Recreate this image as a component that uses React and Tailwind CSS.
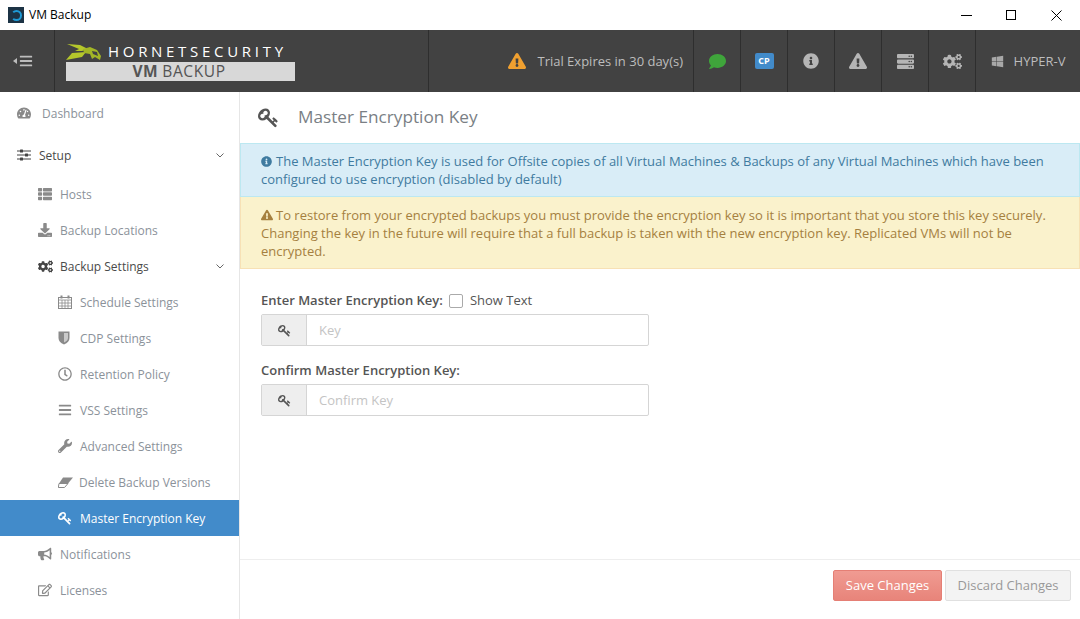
import {
  FaTachometerAlt, FaThList, FaDownload, FaCogs, FaRegClock, FaBars,
  FaWrench, FaBullhorn, FaRegEdit, FaInfoCircle, FaExclamationTriangle, FaComment, FaServer,
  FaWindows,
} from "react-icons/fa";

const font = { fontFamily: '"Open Sans", sans-serif' };

// old font awesome key, the newer one points the other way and has no hollow bow
function KeyIcon({ className }) {
  return (
    <svg viewBox="0 0 1792 1792" fill="currentColor" className={className} width="1em" height="1em">
      <path d="M832 512q0-80-56-136t-136-56-136 56-56 136q0 42 19 83-41-19-83-19-80 0-136 56t-56 136 56 136 136 56 136-56 56-136q0-42-19-83 41 19 83 19 80 0 136-56t56-136zm851 704q0 17-49 66t-66 49q-9 0-28.500-16t-36.500-33-38.500-40-24.500-26l-96 96 220 220q28 28 28 68 0 42-39 81t-81 39q-40 0-68-28l-671-671q-176 131-365 131-163 0-265.500-102.500t-102.500-265.500q0-160 95-313t248-248 313-95q163 0 265.500 102.500t102.500 265.500q0 189-131 365l355 355 96-96q-3-3-26-24.500t-40-38.500-33-36.500-16-28.500q0-17 49-66t66-49q13 0 23 10 6 6 46 44.500t82 79.500 86.500 86 73 78 28.500 41z" />
    </svg>
  );
}

function SlidersIcon({ className }) {
  return (
    <svg viewBox="0 0 14 12" width="14" height="12" className={className} fill="currentColor">
      <path d="M0 1.5h14v1H0zM0 5.500h14v1H0zM0 9.500h14v1H0z" />
      <rect x="3" y="0.5" width="3" height="3" rx="0.5" />
      <rect x="8" y="4.500" width="3" height="3" rx="0.5" />
      <rect x="3" y="8.500" width="3" height="3" rx="0.5" />
    </svg>
  );
}

function CalendarIcon({ className }) {
  return (
    <svg viewBox="0 0 14 14" width="14" height="14" className={className} fill="none" stroke="currentColor" strokeWidth="1">
      <rect x="0.5" y="2.500" width="13" height="11" />
      <path d="M0.500 5h13M0.500 8h13M0.500 11h13M4 5v8.500M7 5v8.500M10 5v8.500" strokeWidth="0.8" />
      <path d="M3.500 0.500v3M10.500 0.500v3" strokeWidth="2" />
    </svg>
  );
}

function ShieldIcon({ className }) {
  return (
    <svg viewBox="0 0 12 14" width="12" height="14" className={className}>
      <path d="M0.500 0.500h11v6.500q0 4-5.500 6.500-5.500-2.500-5.500-6.500z" fill="currentColor" />
      <path d="M6 2h4v5q0 2.500-4 4.500z" fill="#fff" opacity="0.55" />
    </svg>
  );
}

function EraserIcon({ className }) {
  return (
    <svg viewBox="0 0 15 11" width="15" height="11" className={className}>
      <path d="M5 0.500h10l-5 6H1z" fill="currentColor" />
      <path d="M1 6.500h9l-3.500 4H0.300z" fill="none" stroke="currentColor" strokeWidth="1" />
    </svg>
  );
}

function Chevron() {
  return (
    <svg width="8" height="5" viewBox="0 0 8 5" className="text-[#666]">
      <path d="M0.500 0.500 L4 4 L7.500 0.500" fill="none" stroke="currentColor" strokeWidth="1" />
    </svg>
  );
}

function NavItem({ icon: Icon, label, indent = 0, dark, arrow, active, iconClass = "text-[14px]", gap }) {
  const pad = indent === 0 ? "pl-[17px]" : indent === 1 ? "pl-[38px]" : "pl-[58px]";
  const labelGap = gap || (indent === 0 ? "w-[25px]" : "w-[22px]");
  const color = active ? "bg-[#428bca] text-white" : dark ? "text-[#4a4a4a]" : "text-[#8b929a]";
  const iconColor = active ? "text-white" : dark ? "text-[#444]" : "text-[#8a8a8a]";
  return (
    <div className={`flex items-center h-9 ${pad} pr-[15px] text-[12px] ${color}`}>
      <span className={`${labelGap} shrink-0 flex items-center ${iconColor}`}>
        <Icon className={iconClass} />
      </span>
      <span className="flex-1 pt-[1px]">{label}</span>
      {arrow && <Chevron />}
    </div>
  );
}

function Sidebar() {
  return (
    <aside className="w-[240px] shrink-0 border-r border-[#e6e6e6] pt-[3px] overflow-hidden">
      <NavItem icon={FaTachometerAlt} label="Dashboard" />
      <div className="h-[6px]" />
      <NavItem icon={SlidersIcon} label="Setup" dark arrow gap="w-[22px]" />
      <div className="h-[3px]" />
      <NavItem icon={FaThList} label="Hosts" indent={1} />
      <NavItem icon={FaDownload} label="Backup Locations" indent={1} />
      <NavItem icon={FaCogs} label="Backup Settings" indent={1} dark arrow iconClass="text-[15px]" />
      <NavItem icon={CalendarIcon} label="Schedule Settings" indent={2} />
      <NavItem icon={ShieldIcon} label="CDP Settings" indent={2} />
      <NavItem icon={FaRegClock} label="Retention Policy" indent={2} />
      <NavItem icon={FaBars} label="VSS Settings" indent={2} />
      <NavItem icon={FaWrench} label="Advanced Settings" indent={2} />
      <NavItem icon={EraserIcon} label="Delete Backup Versions" indent={2} gap="w-[21px]" />
      <NavItem icon={KeyIcon} label="Master Encryption Key" indent={2} active />
      <NavItem icon={FaBullhorn} label="Notifications" indent={1} />
      <NavItem icon={FaRegEdit} label="Licenses" indent={1} />
    </aside>
  );
}

function HeaderCell({ children, className = "w-[47px]" }) {
  return (
    <div className={`h-full border-l border-[#2e2e2e] flex items-center justify-center shrink-0 ${className}`}>
      {children}
    </div>
  );
}

function Hornet() {
  return (
    <svg width="36" height="17" viewBox="0 0 36 17" className="shrink-0">
      <path d="M1 0 L14 1 L22 5 L16 7 L9 7 L13 5 Z" fill="#b5c72b" />
      <path d="M0 16 L6 9 L20 8 L16 13 Z" fill="#b5c72b" />
      <path d="M17 5 L24 3 L31 6 L35 12 L34 16 L29 13 L26 15 L24 10 L18 9 Z" fill="#a3b626" />
      <path d="M26 7 L31 8 L32 12 L27 10 Z" fill="#424242" />
    </svg>
  );
}

function Header() {
  return (
    <header className="h-[62px] bg-[#424242] flex items-center shrink-0">
      <div className="w-[55px] h-full flex items-center pl-[13px] gap-[2px] shrink-0 border-r border-[#2e2e2e]">
        <svg width="4" height="6" viewBox="0 0 4 6"><path d="M4 0 V6 L0 3 Z" fill="#bdbdbd" /></svg>
        <FaBars className="text-[14px] text-[#bdbdbd]" />
      </div>
      <div className="w-[374px] h-full shrink-0 pl-[11px] pt-[13px] border-r border-[#2e2e2e]">
        <div className="w-[229px] h-[19px] flex items-center">
          <Hornet />
          <span className="ml-[6px] pb-[2px] text-[15px] leading-none tracking-[3.700px] text-white whitespace-nowrap">
            HORNETSECURITY
          </span>
        </div>
        <div className="w-[229px] h-[19px] bg-[#d8d8d8] flex items-center justify-center text-[15.500px] tracking-[0.600px] leading-none text-[#555] pr-[3px]">
          <b className="mr-[4px]">VM</b> BACKUP
        </div>
      </div>
      <div className="flex-1 h-full flex items-center justify-end pr-[10px] text-[13px] text-[#bdbdbd]">
        <FaExclamationTriangle className="text-[18px] text-[#f0a030] mr-[11px]" />
        <span className="pt-[1px]">Trial Expires in 30 day(s)</span>
      </div>
      <HeaderCell><FaComment className="text-[17px] text-[#3fa53b]" /></HeaderCell>
      <HeaderCell>
        <span className="w-[19px] h-[16px] rounded-[2px] bg-[#428bca] text-white text-[9px] font-bold flex items-center justify-center">CP</span>
      </HeaderCell>
      <HeaderCell><FaInfoCircle className="text-[16px] text-[#b5b5b5]" /></HeaderCell>
      <HeaderCell><FaExclamationTriangle className="text-[18px] text-[#b5b5b5]" /></HeaderCell>
      <HeaderCell><FaServer className="text-[17px] text-[#b5b5b5]" /></HeaderCell>
      <HeaderCell><FaCogs className="text-[19px] text-[#b5b5b5]" /></HeaderCell>
      <HeaderCell className="w-[105px] gap-[10px] text-[13px] text-[#bdbdbd]">
        <FaWindows className="text-[13px] text-[#a8a8a8]" />
        <span className="pt-[1px]">HYPER-V</span>
      </HeaderCell>
    </header>
  );
}

function KeyInput({ placeholder }) {
  return (
    <div className="w-[388px] h-[32px] flex border border-[#d5d5d5] rounded-[2px] bg-white">
      <div className="w-[45px] shrink-0 bg-[#eeeeee] border-r border-[#d5d5d5] flex items-center justify-center">
        <KeyIcon className="text-[13px] text-[#555]" />
      </div>
      <div className="flex-1 pl-[12px] pt-[1px] flex items-center text-[13px] text-[#c4c4c4]">{placeholder}</div>
    </div>
  );
}

export default function App() {
  return (
    <div style={font} className="w-[1080px] h-[619px] overflow-hidden bg-white flex flex-col">
      <div className="h-[30px] shrink-0 flex items-center text-[12px] text-black">
        <span className="ml-[8px] w-[16px] h-[16px] bg-[#1c3345] flex items-center justify-center">
          <span className="w-[11px] h-[11px] rounded-full border-2 border-[#1e9ad6] border-l-transparent" />
        </span>
        <span className="ml-[5px] flex-1">VM Backup</span>
        <span className="w-[11px] h-px bg-black mr-[34px]" />
        <span className="w-[10px] h-[10px] border border-black mr-[35px]" />
        <svg width="11" height="11" viewBox="0 0 11 11" className="mr-[18px]">
          <path d="M0.5 0.5 L10.5 10.5 M10.5 0.5 L0.5 10.5" stroke="#000" strokeWidth="1" />
        </svg>
      </div>
      <Header />
      <div className="flex flex-1 min-h-0">
        <Sidebar />
        <main className="flex-1 flex flex-col min-w-0">
          <div className="h-[51px] shrink-0 flex items-center pl-[18px]">
            <KeyIcon className="text-[21px] text-[#555]" />
            <h1 className="ml-[19px] pb-[2px] text-[17.200px] font-normal text-[#7a7f85]">Master Encryption Key</h1>
          </div>
          <div className="h-[54px] shrink-0 bg-[#d9edf7] border border-[#bce8f1] text-[#3f7ba0] text-[13px] leading-[18px] pl-[20px] pr-[20px] pt-[8px]">
            <FaInfoCircle className="inline text-[11px] mr-[4px] align-[-1px]" />
            The Master Encryption Key is used for Offsite copies of all Virtual Machines &amp; Backups of any Virtual Machines which have been configured to use encryption (disabled by default)
          </div>
          <div className="h-[72px] shrink-0 bg-[#faf2cc] border border-t-0 border-[#f7e1b5] text-[#a5803f] text-[13px] leading-[18px] pl-[20px] pr-[20px] pt-[9px]">
            <FaExclamationTriangle className="inline text-[12px] mr-[3px] align-[-1px]" />
            To restore from your encrypted backups you must provide the encryption key so it is important that you store this key securely. Changing the key in the future will require that a full backup is taken with the new encryption key. Replicated VMs will not be encrypted.
          </div>
          <div className="px-[21px] pt-[22px] flex-1">
            <div className="h-[18px] pt-[1px] flex items-center text-[13px] font-semibold text-[#555] mb-[5px]">
              Enter Master Encryption Key:
              <span className="ml-[6px] w-[14px] h-[14px] border border-[#aaa] rounded-[2px]" />
              <span className="ml-[7px] font-normal">Show Text</span>
            </div>
            <KeyInput placeholder="Key" />
            <div className="h-[18px] pt-[1px] flex items-center text-[13px] font-semibold text-[#555] mt-[15px] mb-[5px]">
              Confirm Master Encryption Key:
            </div>
            <KeyInput placeholder="Confirm Key" />
          </div>
          <div className="h-[60px] shrink-0 border-t border-[#eeeeee] flex justify-end items-start pt-[10px] pr-[9px] gap-[3px] text-[13px]">
            <button style={font} className="w-[109px] h-[31px] rounded-[2px] border border-[#e57f75] bg-gradient-to-b from-[#f09b92] to-[#e8847a] text-white">Save Changes</button>
            <button style={font} className="w-[126px] h-[31px] rounded-[2px] border border-[#e0e0e0] bg-[#f3f3f3] text-[#999]">Discard Changes</button>
          </div>
        </main>
      </div>
    </div>
  );
}
